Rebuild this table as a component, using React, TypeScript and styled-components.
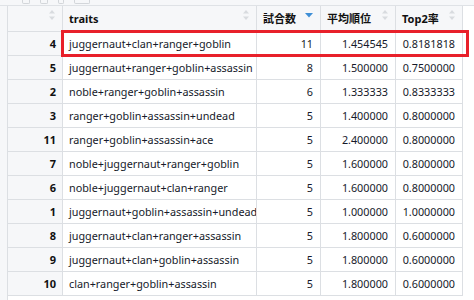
import styled, { createGlobalStyle } from 'styled-components';

const GlobalStyle = createGlobalStyle`
  html, body {
    margin: 0;
    padding: 0;
    background: #ffffff;
  }
  body {
    font-family: "Noto Sans", "Noto Sans CJK JP", sans-serif;
  }
`;

type Row = {
  id: number;
  traits: string;
  games: number;
  avg: string;
  top2: string;
};

const rows: Row[] = [
  { id: 4, traits: 'juggernaut+clan+ranger+goblin', games: 11, avg: '1.454545', top2: '0.8181818' },
  { id: 5, traits: 'juggernaut+ranger+goblin+assassin', games: 8, avg: '1.500000', top2: '0.7500000' },
  { id: 2, traits: 'noble+ranger+goblin+assassin', games: 6, avg: '1.333333', top2: '0.8333333' },
  { id: 3, traits: 'ranger+goblin+assassin+undead', games: 5, avg: '1.400000', top2: '0.8000000' },
  { id: 11, traits: 'ranger+goblin+assassin+ace', games: 5, avg: '2.400000', top2: '0.8000000' },
  { id: 7, traits: 'noble+juggernaut+ranger+goblin', games: 5, avg: '1.600000', top2: '0.8000000' },
  { id: 6, traits: 'noble+juggernaut+clan+ranger', games: 5, avg: '1.600000', top2: '0.8000000' },
  { id: 1, traits: 'juggernaut+goblin+assassin+undead', games: 5, avg: '1.000000', top2: '1.0000000' },
  { id: 8, traits: 'juggernaut+clan+ranger+assassin', games: 5, avg: '1.800000', top2: '0.6000000' },
  { id: 9, traits: 'juggernaut+clan+goblin+assassin', games: 5, avg: '1.800000', top2: '0.6000000' },
  { id: 10, traits: 'clan+ranger+goblin+assassin', games: 5, avg: '1.800000', top2: '0.6000000' },
];

const COLS = '55px 194px 64px 75px 67px';

const Viewer = styled.div`
  position: relative;
  width: 474px;
  height: 300px;
  overflow: hidden;
  background: #ffffff;
`;

const Toolbar = styled.div`
  height: 6px;
  box-sizing: border-box;
  display: flex;
  align-items: flex-end;
  gap: 10px;
  padding-left: 22px;
  background: #f6f7f9;
  border-bottom: 1px solid #dfe2e6;
  overflow: hidden;
`;

const ToolMark = styled.span<{ $w: number }>`
  display: block;
  width: ${p => p.$w}px;
  height: 3px;
  margin-bottom: 1px;
  border: 1px solid #d3d6da;
  border-top: none;
  border-radius: 0 0 2px 2px;
`;

const Body = styled.div`
  display: flex;
`;

const Gutter = styled.div`
  width: 8px;
  flex: none;
  background: #f6f7f9;
  border-right: 1px solid #dcdfe3;
  box-sizing: border-box;
  height: 294px;
`;

const Grid = styled.div`
  display: flex;
  flex-direction: column;
  font-size: 10.8px;
  line-height: 14px;
  color: #161a2a;
`;

const Line = styled.div<{ $head?: boolean }>`
  display: grid;
  grid-template-columns: ${COLS};
  height: ${p => (p.$head ? 26 : 24)}px;
  box-sizing: border-box;
  border-bottom: 1px solid #dcdfe3;
`;

const Head = styled.div`
  position: relative;
  display: flex;
  align-items: center;
  padding: 0 6px;
  font-weight: 700;
  font-size: 11px;
  color: #111;
  background: #f6f7f9;
  border-right: 1px solid #dcdfe3;
  white-space: nowrap;
`;

const SortIcon = styled.svg`
  position: absolute;
  right: 6px;
  top: 3px;
`;

const Cell = styled.div<{ $num?: boolean }>`
  display: flex;
  align-items: center;
  justify-content: ${p => (p.$num ? 'flex-end' : 'flex-start')};
  padding: 0 7px 0 6px;
  border-right: 1px solid #dcdfe3;
  white-space: nowrap;
  overflow: hidden;
`;

const IndexCell = styled(Cell)`
  justify-content: flex-end;
  font-weight: 700;
  font-size: 11px;
  color: #111;
  background: #f6f7f9;
  padding-right: 6px;
`;

const Highlight = styled.div`
  position: absolute;
  left: 61px;
  top: 30px;
  width: 408px;
  height: 27px;
  border: 3px solid #e8202a;
  box-sizing: border-box;
  pointer-events: none;
`;

const Both = () => (
  <SortIcon width="8" height="12" viewBox="0 0 8 12">
    <path d="M4 1 L7 4.5 H1 Z" fill="#d8dbdf" />
    <path d="M4 11 L7 7.5 H1 Z" fill="#d8dbdf" />
  </SortIcon>
);

const Desc = () => (
  <SortIcon width="10" height="12" viewBox="0 0 10 12">
    <path d="M1 4 H9 L5 8.5 Z" fill="#3f8fd6" />
  </SortIcon>
);

export default function App() {
  return (
    <Viewer>
      <GlobalStyle />
      <Toolbar>
        <ToolMark $w={6} />
        <ToolMark $w={6} />
        <ToolMark $w={4} />
        <ToolMark $w={14} />
      </Toolbar>
      <Body>
        <Gutter />
        <Grid>
          <Line $head>
            <Head><Both /></Head>
            <Head>traits<Both /></Head>
            <Head>試合数<Desc /></Head>
            <Head>平均順位<Both /></Head>
            <Head>Top2率<Both /></Head>
          </Line>
          {rows.map(r => (
            <Line key={r.id}>
              <IndexCell>{r.id}</IndexCell>
              <Cell>{r.traits}</Cell>
              <Cell $num>{r.games}</Cell>
              <Cell $num>{r.avg}</Cell>
              <Cell $num>{r.top2}</Cell>
            </Line>
          ))}
        </Grid>
      </Body>
      <Highlight />
    </Viewer>
  );
}
